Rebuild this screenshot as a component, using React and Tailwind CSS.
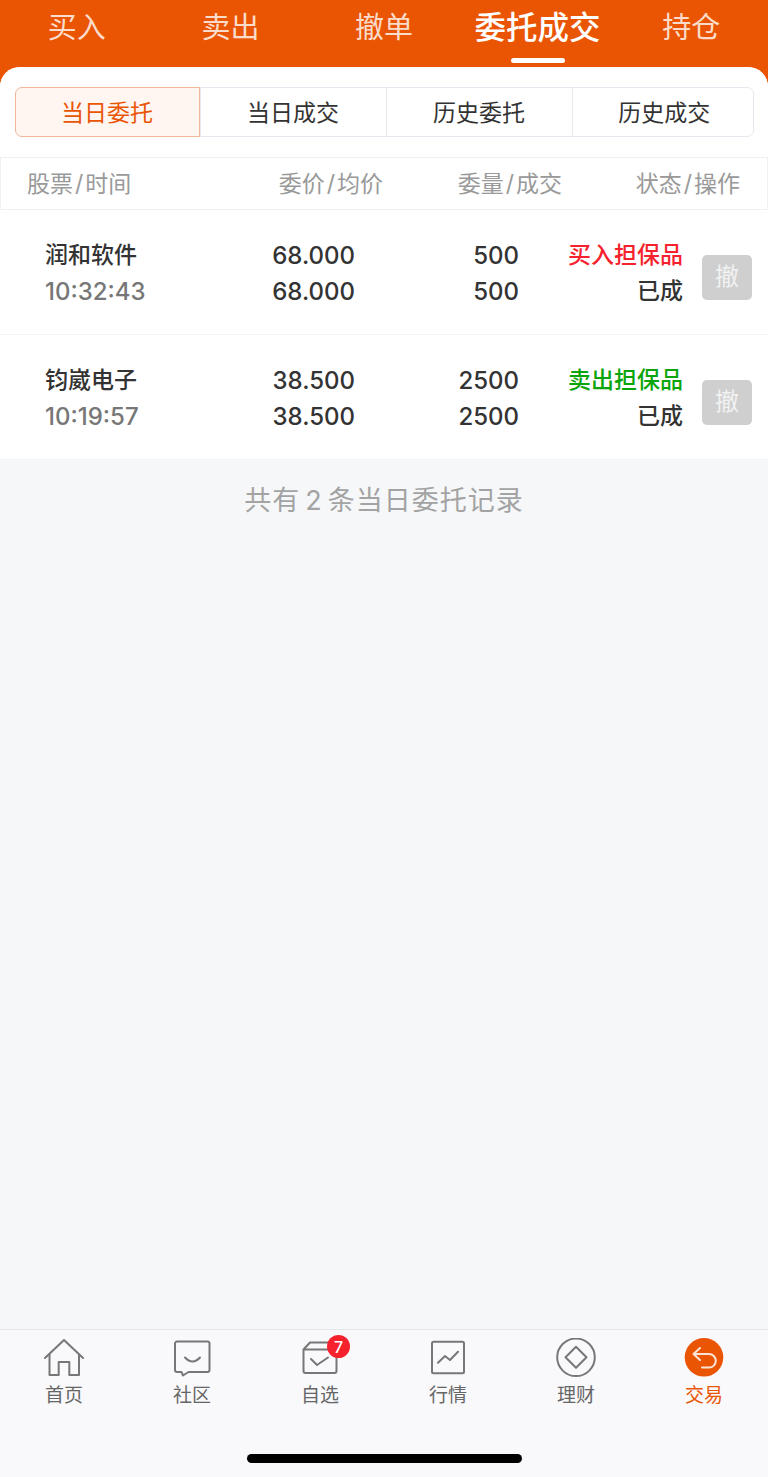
const topTabs = ['买入', '卖出', '撤单', '委托成交', '持仓'];
const subTabs = ['当日委托', '当日成交', '历史委托', '历史成交'];

const orders = [
  { name: '润和软件', time: '10:32:43', price: '68.000', qty: '500', side: '买入担保品', sideColor: 'text-[#f5222d]' },
  { name: '钧崴电子', time: '10:19:57', price: '38.500', qty: '2500', side: '卖出担保品', sideColor: 'text-[#0aa50a]' },
];

function HomeIcon() {
  return (
    <svg width="40" height="40" viewBox="0 0 40 40" fill="none" stroke="#777" strokeWidth="2" strokeLinejoin="round" strokeLinecap="round">
      <path d="M1 20 L20 2 L39 20" />
      <path d="M5.5 16.5 V37 H14.7 V24 H25.3 V37 H35 V16.5" />
    </svg>
  );
}

function ChatIcon() {
  return (
    <svg width="40" height="40" viewBox="0 0 40 40" fill="none" stroke="#777" strokeWidth="2" strokeLinejoin="round" strokeLinecap="round">
      <path d="M5 3.5 H35.5 a2 2 0 0 1 2 2 V32 a2 2 0 0 1 -2 2 H16.5 L11 37.5 L9.5 34 H5 a2 2 0 0 1 -2 -2 V5.5 a2 2 0 0 1 2 -2 Z" />
      <path d="M13 19.5 Q20.5 27.5 28 19.5" />
    </svg>
  );
}

function WatchIcon() {
  return (
    <svg width="40" height="40" viewBox="0 0 40 40" fill="none" stroke="#777" strokeWidth="2" strokeLinejoin="round" strokeLinecap="round">
      <path d="M3.5 11.5 V33 a2 2 0 0 0 2 2 H34.5 a2 2 0 0 0 2 -2 V11.5 H3.5 L10 4.5 H32" />
      <path d="M11 21 L17 27 L28 19.5" />
    </svg>
  );
}

function ChartIcon() {
  return (
    <svg width="40" height="40" viewBox="0 0 40 40" fill="none" stroke="#777" strokeWidth="2" strokeLinejoin="round" strokeLinecap="round">
      <rect x="4" y="3.7" width="32" height="31.5" rx="1.5" />
      <path d="M10 24.7 L17 18 L22 22 L30 13.7" />
    </svg>
  );
}

function MoneyIcon() {
  return (
    <svg width="40" height="40" viewBox="0 0 40 40" fill="none" stroke="#777" strokeWidth="2" strokeLinejoin="round">
      <circle cx="20" cy="19.3" r="18.8" />
      <path d="M20 8.8 L30.5 19.3 L20 29.8 L9.5 19.3 Z" />
    </svg>
  );
}

function TradeIcon() {
  return (
    <svg width="40" height="40" viewBox="0 0 40 40" fill="none">
      <circle cx="20" cy="19.3" r="19.3" fill="#ea5504" />
      <path d="M16 10 L9.5 16 L16 22 M9.5 16 H25 a6.8 6.8 0 0 1 0 13.6 H18" stroke="#fbe3d6" strokeWidth="2" strokeLinecap="round" strokeLinejoin="round" />
    </svg>
  );
}

const navItems = [
  { label: '首页', icon: <HomeIcon /> },
  { label: '社区', icon: <ChatIcon /> },
  { label: '自选', icon: <WatchIcon />, badge: '7' },
  { label: '行情', icon: <ChartIcon /> },
  { label: '理财', icon: <MoneyIcon /> },
  { label: '交易', icon: <TradeIcon />, active: true },
];

function SlashLabel({ a, b }) {
  return (
    <span className="whitespace-nowrap">
      {a}
      <span className="mx-[2px]">/</span>
      {b}
    </span>
  );
}

export default function App() {
  return (
    <div className="flex h-[1477px] w-[768px] flex-col overflow-hidden bg-[#ea5504] font-['Inter','Noto_Sans_CJK_SC',sans-serif]">
      {/* Top tabs */}
      <div className="flex h-[67px] shrink-0">
        {topTabs.map((t, i) => (
          <div key={t} className="relative flex-1 pt-[8px] text-center">
            {i === 3 ? (
              <>
                <span className="text-[31.5px] leading-[40px] font-medium text-white">{t}</span>
                <div className="absolute top-[58px] left-1/2 h-[5px] w-[54px] -translate-x-1/2 rounded-full bg-white" />
              </>
            ) : (
              <span className="text-[29px] leading-[40px] text-[#fbdccb]">{t}</span>
            )}
          </div>
        ))}
      </div>

      {/* Main panel */}
      <div className="flex min-h-0 flex-1 flex-col overflow-hidden rounded-t-[20px] bg-[#f6f7f9]">
        <div className="bg-white px-[15px] pt-[20px] pb-[20px]">
          <div className="flex h-[50px] w-[739px] rounded-[7px] border-[1.5px] border-[#e6e8ef] text-[23px] leading-[50px]">
            {subTabs.map((t, i) => (
              <div
                key={t}
                className={
                  i === 0
                    ? 'relative -my-[1.5px] -ml-[1.5px] flex h-[50px] w-[185px] shrink-0 items-center justify-center rounded-l-[7px] border-[1.5px] border-[#f2b79b] bg-[#fff5f1] pt-[2px] text-[#ea5504]'
                    : i === 3
                      ? 'flex flex-1 items-center justify-center border-l-[1.5px] border-[#e6e8ef] pt-[1px] pl-[3px] text-[#333]'
                      : 'flex w-[186px] shrink-0 items-center justify-center border-l-[1.5px] border-[#e6e8ef] pt-[1px] text-[#333]'
                }
              >
                {t}
              </div>
            ))}
          </div>
        </div>

        {/* Table header */}
        <div className="flex h-[53px] shrink-0 items-center border border-[#f0f1f3] bg-white pt-[2px] text-[23px] text-[#999]">
          <div className="w-[26px] shrink-0" />
          <div className="flex-1"><SlashLabel a="股票" b="时间" /></div>
          <div className="w-[178px] shrink-0 text-right"><SlashLabel a="委价" b="均价" /></div>
          <div className="w-[179px] shrink-0 text-right"><SlashLabel a="委量" b="成交" /></div>
          <div className="w-[178px] shrink-0 text-right"><SlashLabel a="状态" b="操作" /></div>
          <div className="w-[27px] shrink-0" />
        </div>

        {/* Orders */}
        {orders.map((o) => (
          <div key={o.name} className="flex h-[125px] shrink-0 items-center border-b border-[#f2f3f5] bg-white pt-[2px] pl-[45px] leading-[36px]">
            <div className="w-[200px] shrink-0">
              <div className="text-[23px] font-medium text-[#333]">{o.name}</div>
              <div className="pt-[1px] text-[24px] font-medium text-[#777]">{o.time}</div>
            </div>
            <div className="w-[110px] shrink-0 pt-[2px] text-right text-[24px] font-medium text-[#333]">
              <div>{o.price}</div>
              <div>{o.price}</div>
            </div>
            <div className="w-[164px] shrink-0 pt-[2px] text-right text-[24px] font-medium text-[#333]">
              <div>{o.qty}</div>
              <div>{o.qty}</div>
            </div>
            <div className="w-[164px] shrink-0 text-right text-[23px] font-medium">
              <div className={o.sideColor}>{o.side}</div>
              <div className="text-[#333]">已成</div>
            </div>
            <div className="mt-[8px] ml-[19px] flex h-[45px] w-[50px] shrink-0 items-center justify-center rounded-[5px] bg-[#cfcfcf] text-[24px] text-[#f2f2f2]">
              撤
            </div>
          </div>
        ))}

        <div className="pt-[21px] text-center text-[27px] leading-[40px] tracking-[1px] text-[#a3a3a3]">
          共有<span className="mx-[5px]">2</span>条当日委托记录
        </div>

        {/* Bottom nav */}
        <div className="mt-auto h-[148px] shrink-0 border-t border-[#e4e5e8] bg-[#f9f9fb]">
          <div className="flex pt-[8px]">
            {navItems.map((n) => (
              <div key={n.label} className="flex w-[128px] flex-col items-center">
                <div className="relative h-[40px] w-[40px]">
                  {n.icon}
                  {n.badge && (
                    <span className="absolute top-[-3px] left-[27px] flex h-[23px] w-[23px] items-center justify-center rounded-full bg-[#f5222d] text-[16px] font-medium text-white">
                      {n.badge}
                    </span>
                  )}
                </div>
                <div className={n.active ? 'mt-[4px] text-[19px] leading-[28px] text-[#ea5504]' : 'mt-[4px] text-[19px] leading-[28px] text-[#666]'}>
                  {n.label}
                </div>
              </div>
            ))}
          </div>
          <div className="mx-auto mt-[44px] h-[9px] w-[275px] rounded-full bg-black" />
        </div>
      </div>
    </div>
  );
}
